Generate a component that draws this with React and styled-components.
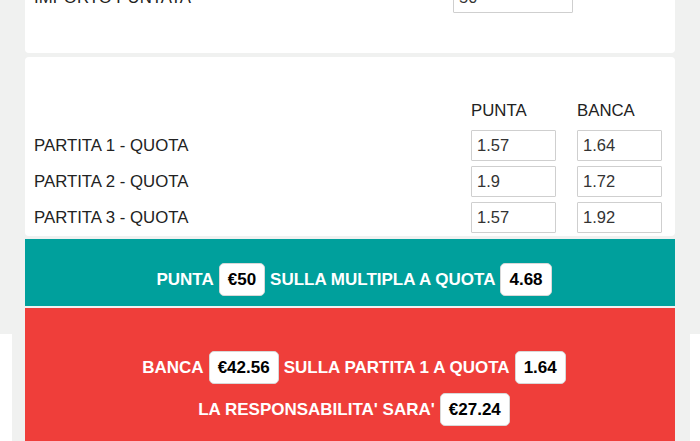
import React from "react";
import styled, { createGlobalStyle } from "styled-components";

const GRAY = "#f0f1f0";

const Global = createGlobalStyle`
  html, body { margin: 0; padding: 0; background: #fff; overflow: hidden; }
  body { font-family: "Liberation Sans", Arial, sans-serif; }
  * { box-sizing: border-box; }
`;

const Page = styled.div`
  display: flex;
  flex-direction: column;
  margin-top: -30px;
  background: linear-gradient(${GRAY} 0 364px, #fff 364px);
`;

const Shell = styled.div`
  margin: 0 10px 0 12px;
  padding: 0 15px 0 13px;
  background: ${GRAY};
  display: flex;
  flex-direction: column;
`;

const Card = styled.section`
  background: #fff;
  border-radius: 4px;
  padding: ${(p) => p.$pad};
  margin-bottom: ${(p) => p.$mb || "0"};
`;

const StakeRow = styled.div`
  display: grid;
  grid-template-columns: 419px 120px;
  align-items: center;
`;

const OddsGrid = styled.div`
  display: grid;
  grid-template-columns: 416px 85px 85px;
  column-gap: 21px;
  row-gap: 5px;
  align-items: center;
`;

const Label = styled.span`
  font-size: 16.8px;
  line-height: 20px;
  color: #222;
`;

const HeadCell = styled(Label)`
  margin-bottom: 4px;
`;

const Field = styled.input`
  width: 100%;
  height: 31px;
  border: 1px solid #cfcfcf;
  border-radius: 1px;
  padding: 0 5px;
  font: 16.5px "Liberation Sans", Arial, sans-serif;
  color: #333;
  background: #fff;
  outline: none;
`;

const Band = styled.div`
  background: ${(p) => p.$bg};
  padding: ${(p) => p.$pad};
  margin-bottom: ${(p) => p.$mb || "0"};
  display: flex;
  flex-direction: column;
  align-items: center;
  gap: 9px;
`;

const Line = styled.div`
  display: flex;
  align-items: center;
  gap: 5px;
  padding-left: 8px;
  color: #fff;
  font-weight: bold;
  font-size: 17px;
`;

const Badge = styled.span`
  display: inline-flex;
  align-items: center;
  height: 33px;
  padding: 0 8px;
  background: #fff;
  color: #000;
  border: 1px solid #d8d8d8;
  border-radius: 5px;
  font-weight: bold;
  font-size: 17px;
`;

const rows = [
  ["PARTITA 1 - QUOTA", "1.57", "1.64"],
  ["PARTITA 2 - QUOTA", "1.9", "1.72"],
  ["PARTITA 3 - QUOTA", "1.57", "1.92"],
];

export default function App() {
  return (
    <>
      <Global />
      <Page>
        <Shell>
          <Card $pad="12px 9px 40px" $mb="4px">
            <StakeRow>
              <Label>IMPORTO PUNTATA</Label>
              <Field readOnly value="50" />
            </StakeRow>
          </Card>
          <Card $pad="44px 13px 3px 9px" $mb="3px">
            <OddsGrid>
              <span />
              <HeadCell>PUNTA</HeadCell>
              <HeadCell>BANCA</HeadCell>
              {rows.map(([name, back, lay]) => (
                <React.Fragment key={name}>
                  <Label>{name}</Label>
                  <Field readOnly value={back} />
                  <Field readOnly value={lay} />
                </React.Fragment>
              ))}
            </OddsGrid>
          </Card>
          <Band $bg="#00a09c" $pad="24px 0 10px" $mb="2px">
            <Line>
              PUNTA <Badge>€50</Badge> SULLA MULTIPLA A QUOTA <Badge>4.68</Badge>
            </Line>
          </Band>
          <Band $bg="#ef3e3a" $pad="43px 0 60px">
            <Line>
              BANCA <Badge>€42.56</Badge> SULLA PARTITA 1 A QUOTA <Badge>1.64</Badge>
            </Line>
            <Line>
              LA RESPONSABILITA' SARA' <Badge>€27.24</Badge>
            </Line>
          </Band>
        </Shell>
      </Page>
    </>
  );
}
